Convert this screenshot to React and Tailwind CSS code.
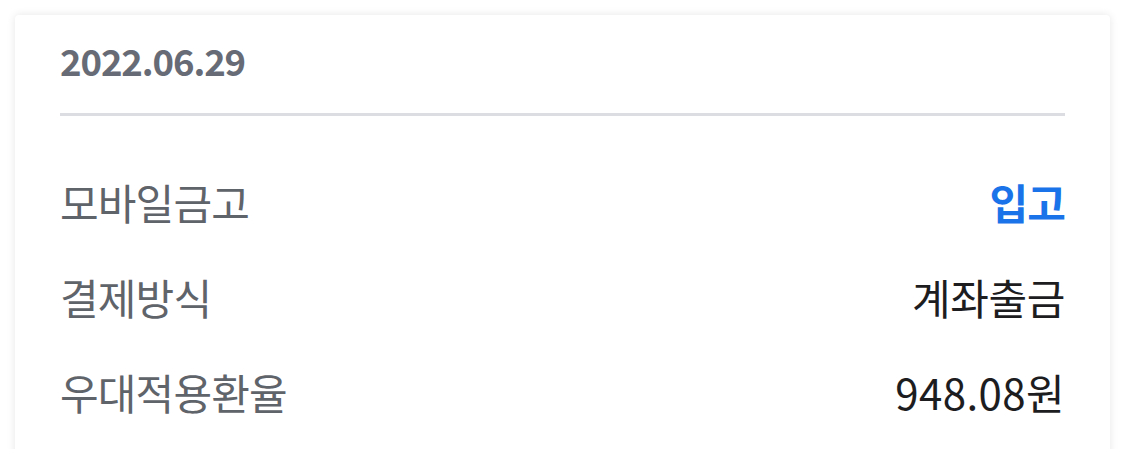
export default function App() {
  const rows = [
    { label: "모바일금고", value: "입고", accent: true },
    { label: "결제방식", value: "계좌출금" },
    { label: "우대적용환율", value: "948.08원", wide: true },
  ];

  return (
    <div
      className="h-[449px] w-full overflow-hidden bg-white pl-[15px] pt-[15px]"
      style={{ fontFamily: '"Noto Sans CJK KR", "Noto Sans", sans-serif' }}
    >
      <div className="h-[460px] w-[1095px] rounded-[4px] bg-white px-[45px] shadow-[0_0_8px_rgba(0,0,0,0.10)]">
        {/* Header */}
        <div className="flex h-[101px] items-center border-b-[3px] border-[#dcdde3] pb-[6px]">
          <span className="text-[36.5px] font-bold leading-none tracking-[-0.03em] text-[#666b75]">
            2022.06.29
          </span>
        </div>

        {/* Details */}
        <div className="pt-[38px]">
          {rows.map(({ label, value, accent, wide }) => (
            <div key={label} className="flex h-[95px] items-center justify-between">
              <span className="text-[42px] leading-none tracking-[-0.02em] text-[#5f636a]">{label}</span>
              <span
                className={
                  accent
                    ? "text-[42px] font-bold leading-none tracking-[-0.02em] text-[#1a73e8]"
                    : wide
                    ? "text-[42px] leading-none tracking-[0.01em] text-[#1d1d1f]"
                    : "text-[42px] leading-none tracking-[-0.01em] text-[#1d1d1f]"
                }
              >
                {value}
              </span>
            </div>
          ))}
        </div>
      </div>
    </div>
  );
}
